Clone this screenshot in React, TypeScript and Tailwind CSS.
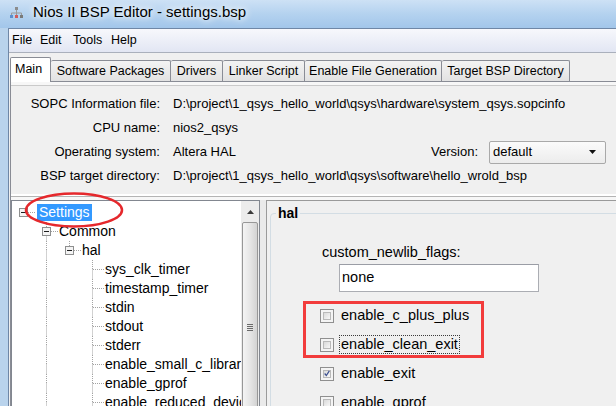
import React from 'react';

type CellProps = { up?: boolean; down?: boolean; right?: boolean; box?: boolean };

// one 23px indent column of the tree, with its dotted guide lines
function Cell({ up, down, right, box }: CellProps) {
    const dot = { stroke: '#a3a3a3', strokeWidth: 1, strokeDasharray: '1 1' };
    return (
        <svg width="23" height="19" className="shrink-0">
            {up && <line x1="11.5" y1="0" x2="11.5" y2="9.5" {...dot} />}
            {down && <line x1="11.5" y1="9.5" x2="11.5" y2="19" {...dot} />}
            {right && <line x1="12" y1="9.5" x2="23" y2="9.5" {...dot} />}
            {box && (
                <g>
                    <rect x="7.5" y="5.5" width="8" height="8" fill="#f4f4f4" stroke="#8e8f8f" />
                    <line x1="9" y1="9.5" x2="14" y2="9.5" stroke="#1e1e1e" />
                </g>
            )}
        </svg>
    );
}

function TreeRow({ cells, label, selected }: { cells: CellProps[]; label: string; selected?: boolean }) {
    return (
        <div className="flex h-[19px] items-center whitespace-nowrap">
            {cells.map((c, i) => (
                <Cell key={i} {...c} />
            ))}
            {selected ? (
                <span className="ml-[2px] px-[2px] h-[17px] leading-[17px] bg-[#3399ff] text-white">{label}</span>
            ) : (
                <span className="ml-[1px] leading-[17px]">{label}</span>
            )}
        </div>
    );
}

function CheckRow({ label, checked, focused }: { label: string; checked?: boolean; focused?: boolean }) {
    return (
        <div className="flex h-[29px] items-center ml-[49px]">
            <div className="w-[14px] h-[14px] shrink-0 border border-[#8f8f8f] bg-[#f4f4f4] p-[2px]">
                <div className="w-full h-full border border-[#b9b9b9] bg-gradient-to-br from-[#dadada] to-[#f7f7f7] flex items-center justify-center">
                    {checked && (
                        <svg width="9" height="9" viewBox="0 0 9 9" className="-mt-[1px]">
                            <path d="M1 4.5 L3.5 7.5 L8 0.5" fill="none" stroke="#3c4f8f" strokeWidth="1.8" />
                        </svg>
                    )}
                </div>
            </div>
            <span
                className={
                    'ml-[5px] px-[1px] leading-[17px] border border-dotted ' +
                    (focused ? 'border-[#3a3a3a]' : 'border-transparent')
                }
            >
                {label}
            </span>
        </div>
    );
}

const info = [
    { label: 'SOPC Information file:', value: 'D:\\project\\1_qsys_hello_world\\qsys\\hardware\\system_qsys.sopcinfo' },
    { label: 'CPU name:', value: 'nios2_qsys' },
    { label: 'Operating system:', value: 'Altera HAL' },
    { label: 'BSP target directory:', value: 'D:\\project\\1_qsys_hello_world\\qsys\\software\\hello_wrold_bsp' },
];

const tabs = [
    { name: 'Software Packages', w: 'w-[120px]' },
    { name: 'Drivers', w: 'w-[52px]' },
    { name: 'Linker Script', w: 'w-[82px]' },
    { name: 'Enable File Generation', w: 'w-[137px]' },
    { name: 'Target BSP Directory', w: 'w-[128px]' },
];

const halChildren = [
    'sys_clk_timer',
    'timestamp_timer',
    'stdin',
    'stdout',
    'stderr',
    'enable_small_c_library',
    'enable_gprof',
    'enable_reduced_device_drivers',
];

export default function App() {
    return (
        <div className="relative w-[616px] h-[406px] overflow-hidden flex flex-col bg-[#b9d3ec] font-['Liberation_Sans',Arial,sans-serif] text-black">
            {/* Title bar */}
            <div className="h-[28px] shrink-0 flex items-center pl-[10px] bg-gradient-to-b from-[#cde1f5] via-[#b4d2ef] to-[#a2c6ea]">
                <svg width="13" height="12" viewBox="0 0 13 12" className="-mt-[2px]">
                    <rect x="5" y="0" width="3" height="3" fill="#8c8c8c" />
                    <path d="M6.5 3 V6 M1.5 6 H11.5 M1.5 6 V8 M6.5 6 V8 M11.5 6 V8" stroke="#9a9a9a" fill="none" />
                    <rect x="0" y="8" width="3" height="3" fill="#5b8fd0" />
                    <rect x="5" y="8" width="3" height="3" fill="#d05b5b" />
                    <rect x="10" y="8" width="3" height="3" fill="#7a7a7a" />
                </svg>
                <span className="ml-[10px] text-[15px] -mt-[3px] [text-shadow:0_0_6px_#ffffff,0_0_10px_#ffffff]">
                    Nios II BSP Editor - settings.bsp
                </span>
            </div>

            <div className="flex-1 min-h-0 flex pl-[8px]">
                <div className="flex-1 min-w-0 flex flex-col border-l border-t border-[#6f87a6] bg-[#f0f0f0]">
                    {/* Menu bar */}
                    <div className="h-[24px] shrink-0 flex items-center pl-[3px] text-[12.5px] bg-gradient-to-b from-[#f7f8fc] to-[#e2e6f3] border-b border-[#aab0bc]">
                        <span className="w-[28px]">File</span>
                        <span className="w-[33px]">Edit</span>
                        <span className="w-[38px]">Tools</span>
                        <span>Help</span>
                    </div>

                    {/* Tabs */}
                    <div className="h-[28px] shrink-0 flex items-end pl-[1px] text-[12.5px]">
                        <div className="relative z-10 w-[41px] h-[25px] -mb-[1px] bg-white border border-b-0 border-[#898c95] rounded-t-[2px] pl-[4px] pt-[3px] leading-[17px]">
                            Main
                        </div>
                        {tabs.map((t) => (
                            <div
                                key={t.name}
                                className={
                                    t.w +
                                    ' h-[21px] shrink-0 border border-b-0 border-l-0 border-[#898c95] rounded-t-[2px] bg-gradient-to-b from-[#f3f3f3] to-[#e2e2e2] flex items-center justify-center'
                                }
                            >
                                {t.name}
                            </div>
                        ))}
                    </div>

                    {/* Tab panel */}
                    <div className="flex-1 min-h-0 flex flex-col ml-[1px] border-t border-l border-[#898c95] bg-[#f7f7f7]">
                        <div className="mt-[3px] border-t border-[#cacaca] bg-[#f0f0f0] pt-[6px] pb-[6px] text-[13px]">
                            {info.map((row, i) => (
                                <div key={row.label} className="grid grid-cols-[149px_1fr] gap-x-[13px] h-[24px] items-center">
                                    <span className="text-right whitespace-nowrap">{row.label}</span>
                                    {i === 2 ? (
                                        <div className="flex items-center">
                                            <span>{row.value}</span>
                                            <span className="ml-auto">Version:</span>
                                            <div className="ml-[11px] mr-[10px] w-[117px] h-[23px] border border-[#a9a9a9] rounded-[2px] bg-gradient-to-b from-[#fbfbfb] to-[#ececec] flex items-center pl-[3px] pr-[9px]">
                                                <span className="flex-1">default</span>
                                                <svg width="7" height="4">
                                                    <path d="M0 0 H7 L3.5 4 Z" fill="#111" />
                                                </svg>
                                            </div>
                                        </div>
                                    ) : (
                                        <span className="whitespace-nowrap">{row.value}</span>
                                    )}
                                </div>
                            ))}
                        </div>

                        <div className="h-[2px] shrink-0 bg-white" />

                        {/* Split pane */}
                        <div className="flex-1 min-h-0 flex border-t border-[#b4b4b4] pt-[3px]">
                            {/* Tree */}
                            <div className="w-[249px] shrink-0 flex border-t border-l border-r border-[#828790]">
                                <div className="flex-1 min-w-0 overflow-hidden bg-white pt-[2px] text-[14px]">
                                    <TreeRow cells={[{ box: true, right: true }]} label="Settings" selected />
                                    <TreeRow cells={[{}, { up: true, down: true, right: true, box: true }]} label="Common" />
                                    <TreeRow cells={[{}, { up: true, down: true }, { up: true, right: true, box: true }]} label="hal" />
                                    {halChildren.map((c) => (
                                        <TreeRow key={c} cells={[{}, { up: true, down: true }, {}, { up: true, down: true, right: true }]} label={c} />
                                    ))}
                                </div>
                                <div className="w-[18px] shrink-0 flex flex-col bg-[#ececec] overflow-hidden">
                                    <div className="h-[21px] shrink-0 flex items-center justify-center">
                                        <svg width="7" height="4">
                                            <path d="M0 4 L3.5 0 L7 4 Z" fill="#3a3a3a" />
                                        </svg>
                                    </div>
                                    <div className="mx-[1px] h-[230px] shrink-0 rounded-[2px] border border-[#979797] bg-gradient-to-r from-[#f4f4f4] via-[#e6e6e6] to-[#d3d3d3] flex flex-col items-center gap-[1px] pt-[101px]">
                                        <div className="w-[6px] h-[1px] bg-[#6a6a6a]" />
                                        <div className="w-[6px] h-[1px] bg-[#6a6a6a]" />
                                        <div className="w-[6px] h-[1px] bg-[#6a6a6a]" />
                                        <div className="w-[6px] h-[1px] bg-[#6a6a6a]" />
                                    </div>
                                </div>
                            </div>

                            {/* Splitter */}
                            <div className="w-[6px] shrink-0 bg-[#eaeaea]" />

                            {/* Properties */}
                            <div className="flex-1 min-w-0 overflow-hidden border-l border-t border-[#9a9a9a] bg-[#f0f0f0] pl-[3px] pt-[4px] text-[14.5px]">
                                <fieldset className="w-[420px] h-[320px] min-w-0 border border-[#d3dde4] rounded-[4px]">
                                    <legend className="ml-[5px] px-[2px] font-bold text-[14px] leading-[17px]">hal</legend>
                                    <div className="pl-[51px] mt-[21px] h-[18px] leading-[18px]">custom_newlib_flags:</div>
                                    <div className="ml-[68px] mt-[3px] w-[200px] h-[28px] bg-white border border-[#abadb3] border-t-[#9a9da5] flex items-center pl-[2px]">
                                        none
                                    </div>
                                    <div className="mt-[9px]">
                                        <CheckRow label="enable_c_plus_plus" />
                                        <CheckRow label="enable_clean_exit" focused />
                                        <CheckRow label="enable_exit" checked />
                                        <CheckRow label="enable_gprof" />
                                    </div>
                                </fieldset>
                            </div>
                        </div>
                    </div>
                </div>
            </div>

            {/* Red annotations */}
            <svg width="102" height="38" className="absolute left-[23px] top-[191px] pointer-events-none">
                <ellipse cx="51" cy="19" rx="48" ry="16.5" fill="none" stroke="#e5282c" strokeWidth="2.5" />
            </svg>
            <div className="absolute left-[303px] top-[301px] w-[181px] h-[57px] border-[3px] border-[#f23c3c] pointer-events-none" />
        </div>
    );
}
